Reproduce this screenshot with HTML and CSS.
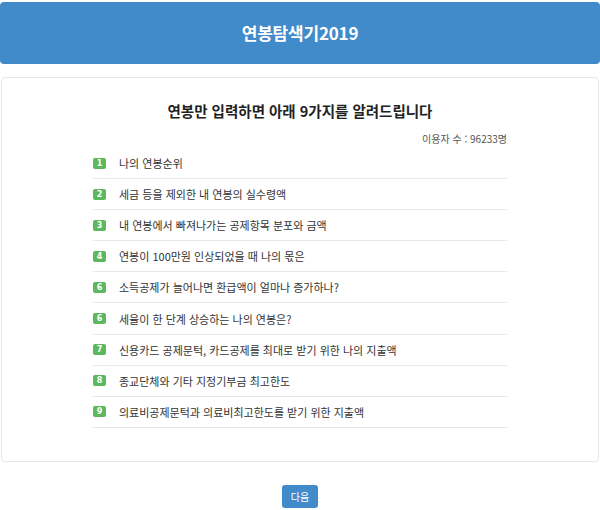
FILE: index.html
```html
<!DOCTYPE html>
<html lang="ko">
<head>
<meta charset="utf-8">
<link rel="stylesheet" href="styles.css">
</head>
<body>
<header class="topbar"><h1 class="brand">연봉탐색기2019</h1></header>
<section class="card">
  <h2 class="card-title">연봉만 입력하면 아래 9가지를 알려드립니다</h2>
  <div class="inner">
    <p class="users">이용자 수 : 96233명</p>
    <ul class="list">
      <li class="item"><span class="badge">1</span><span class="label">나의 연봉순위</span></li>
      <li class="item"><span class="badge">2</span><span class="label">세금 등을 제외한 내 연봉의 실수령액</span></li>
      <li class="item"><span class="badge">3</span><span class="label">내 연봉에서 빠져나가는 공제항목 분포와 금액</span></li>
      <li class="item"><span class="badge">4</span><span class="label">연봉이 100만원 인상되었을 때 나의 몫은</span></li>
      <li class="item"><span class="badge">6</span><span class="label">소득공제가 늘어나면 환급액이 얼마나 증가하나?</span></li>
      <li class="item"><span class="badge">6</span><span class="label">세율이 한 단계 상승하는 나의 연봉은?</span></li>
      <li class="item"><span class="badge">7</span><span class="label">신용카드 공제문턱, 카드공제를 최대로 받기 위한 나의 지출액</span></li>
      <li class="item"><span class="badge">8</span><span class="label">종교단체와 기타 지정기부금 최고한도</span></li>
      <li class="item"><span class="badge">9</span><span class="label">의료비공제문턱과 의료비최고한도를 받기 위한 지출액</span></li>
    </ul>
  </div>
</section>
<div class="actions"><button class="btn">다음</button></div>
</body>
</html>
```
FILE: styles.css
```css
* { box-sizing: border-box; }
html, body { margin: 0; padding: 0; background: #fff; }
body {
  font-family: "Noto Sans CJK KR", "Noto Sans", sans-serif;
  color: #333;
  width: 600px;
}
.topbar {
  margin-top: 2px;
  height: 62px;
  background: #428bca;
  border-radius: 4px;
  display: flex;
  align-items: center;
  justify-content: center;
}
.brand {
  margin: 0;
  color: #fff;
  font-size: 17px;
  font-weight: 700;
  line-height: 22px;
  letter-spacing: -0.2px;
}
.card {
  margin: 13px 1px 0 1px;
  border: 1px solid #e6e6e6;
  border-radius: 4px;
  padding: 23px 0 33px;
  height: 385px;
}
.card-title {
  margin: 0;
  text-align: center;
  font-size: 14.5px;
  font-weight: 700;
  line-height: 20px;
  color: #222;
}
.inner {
  width: 414px;
  margin: 0 auto;
}
.users {
  margin: 10px 0 0;
  text-align: right;
  font-size: 10px;
  line-height: 16px;
  color: #555;
}
.list {
  list-style: none;
  margin: 1px 0 0;
  padding: 0;
}
.item {
  display: flex;
  align-items: center;
  padding: 7px 0 7px 0;
  height: 31.1px;
  line-height: 16px;
  border-bottom: 1px solid #e8e8e8;
  font-size: 11px;
}
.badge {
  width: 13px;
  height: 11px;
  background: #5cb85c;
  color: #fff;
  font-size: 8px;
  font-weight: 700;
  line-height: 11px;
  text-align: center;
  border-radius: 2px;
  font-family: "DejaVu Sans", sans-serif;
}
.label {
  margin-left: 13px;
  color: #333;
}
.actions {
  display: flex;
  justify-content: center;
  margin-top: 23px;
}
.btn {
  width: 36px;
  height: 23px;
  padding: 0;
  border: none;
  border-radius: 3px;
  background: #428bca;
  color: #fff;
  font-family: "Noto Sans CJK KR", sans-serif;
  font-size: 10px;
  line-height: 23px;
}
```
